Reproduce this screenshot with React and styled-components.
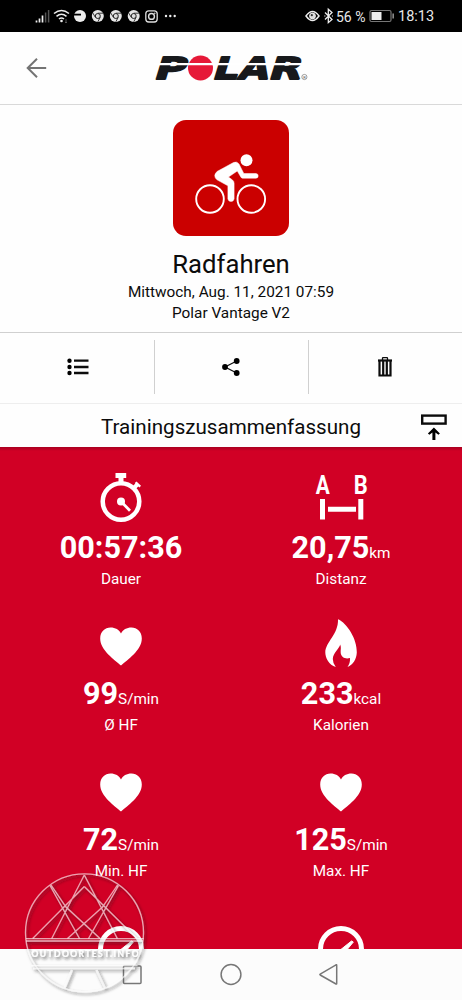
import React from "react";
import styled, { createGlobalStyle } from "styled-components";

const Global = createGlobalStyle`
  * { box-sizing: border-box; }
  body { margin: 0; background: #fff; font-family: Roboto, "Noto Sans", sans-serif; color: #0c0c0c; }
  svg { display: block; flex: none; overflow: visible; }
`;

const Screen = styled.div`
  width: 462px; height: 1000px; position: relative; overflow: hidden;
  display: flex; flex-direction: column; background: #fefefe;
`;
const StatusBar = styled.header`
  height: 32px; flex: none; background: #000; color: #e8e8e8;
  display: flex; align-items: center; justify-content: space-between;
  padding: 0 28px 0 35px;
`;
const StatusSide = styled.div`display: flex; align-items: center; height: 32px;`;
const StatusText = styled.span`
  font-size: ${(p) => p.$size}px; line-height: 32px; white-space: nowrap; padding-top: 1px;
  width: ${(p) => p.$width}px; margin-left: ${(p) => p.$gap || 0}px;
`;
const AppBar = styled.div`
  height: 73px; flex: none; border-bottom: 1px solid #d9d9d9;
  display: grid; grid-template-columns: 154px 1fr; align-items: center;
`;
const BackButton = styled.button`
  border: 0; background: none; padding: 0 0 0 26px; text-align: left;
`;
const Hero = styled.section`
  height: 228px; flex: none; padding-top: 15px; border-bottom: 1px solid #d0d0d0;
  display: flex; flex-direction: column; align-items: center;
`;
const SportTile = styled.div`
  width: 116px; height: 116px; border-radius: 13px; background: #cb0000;
`;
const SportName = styled.h1`
  margin: 13px 0 0; font-size: 25.7px; line-height: 30px; font-weight: 400;
`;
const Detail = styled.p`
  margin: 0; font-size: 15.35px; line-height: 21px;
  padding-top: ${(p) => p.$top || 0}px;
`;
const Actions = styled.nav`
  height: 71px; flex: none; padding: 7px 0 9px; border-bottom: 1px solid #eee;
  display: grid; grid-template-columns: repeat(3, 1fr);
`;
const Action = styled.button`
  border: 0; border-left: ${(p) => (p.$first ? "0" : "1px solid #d0d0d0")};
  padding: 0 ${(p) => p.$right || 0}px 0 ${(p) => (p.$first ? 2 : 0)}px; background: none;
  display: flex; align-items: center; justify-content: center;
`;
const SummaryBar = styled.div`
  height: 43px; flex: none; display: grid; grid-template-columns: 57px 1fr 57px;
  align-items: center; justify-items: center;
`;
const SummaryTitle = styled.h2`
  margin: 0; grid-column: 2; font-weight: 400; font-size: 20.6px; line-height: 44px; padding-top: 1px;
`;
const Stats = styled.main`
  height: 502px; flex: none; overflow: hidden; color: #fff;
  background: linear-gradient(#a90020, #d10025 4px);
  display: grid; grid-template-columns: 220px 220px; grid-auto-rows: 146px;
  padding: 26px 11px 0;
`;
const Stat = styled.div`display: flex; flex-direction: column; align-items: center;`;
const Value = styled.div`
  margin-top: 9px; height: 36px; line-height: 36px; font-size: 30.6px; font-weight: 700; white-space: nowrap;
`;
const Unit = styled.span`font-size: 15.3px; font-weight: 400;`;
const Label = styled.div`font-size: 15.3px; line-height: 20px; margin-top: 3px;`;
const SystemNav = styled.footer`
  height: 51px; flex: none; background: #fcfcfc;
  display: flex; align-items: center; justify-content: center;
`;
const Watermark = styled.div`
  position: absolute; left: 20px; top: 869px; width: 130px; height: 130px; pointer-events: none;
`;

const Chrome = ({ x }) => (
  <g transform={`translate(${x} 16)`}>
    <circle r="6" fill="#e6e6e6" />
    <circle r="2.5" fill="#ddd" stroke="#222" strokeWidth="1" />
    <path d="M0-2.8H5.2M-2.4 1.4-5-3M2.4 1.4 0 5.8" stroke="#222" strokeWidth="0.9" />
  </g>
);

const StatusIcons = () => (
  <svg width="144" height="32" viewBox="35 0 144 32" fill="none">
    <path d="M36.5 22.5v-2M39.5 22.5v-4M42.5 22.5v-7" stroke="#eee" strokeWidth="1.7" />
    <path d="M45.6 22.5V12.5M48.6 22.5V10" stroke="#555" strokeWidth="1.5" />
    <path d="M54 13.5q7.5-6 15 0M56.5 16.3q5-4 10 0M59 19q2.5-2 5 0" stroke="#eee" strokeWidth="1.6" />
    <circle cx="61.5" cy="21" r="1.3" fill="#eee" />
    <path d="M66 19v4m-1-1 1 1 1-1" stroke="#666" strokeWidth=".8" />
    <circle cx="80" cy="16" r="6" fill="#eee" /><path d="M73 14.6h8" stroke="#000" strokeWidth="1.8" />
    <Chrome x={97.8} /><Chrome x={115.8} /><Chrome x={133.7} />
    <rect x="145.8" y="10.8" width="11.4" height="11.2" rx="3" stroke="#ddd" strokeWidth="1.3" />
    <circle cx="151.5" cy="16.4" r="2.9" stroke="#ddd" strokeWidth="1.4" /><circle cx="154.8" cy="13.2" r=".8" fill="#ddd" />
    <g fill="#eee"><circle cx="166" cy="16" r="1.2" /><circle cx="170.3" cy="16" r="1.2" /><circle cx="174.7" cy="16" r="1.2" /></g>
  </svg>
);
const EyeBluetooth = () => (
  <svg width="31" height="32" viewBox="305 0 31 32" fill="none" stroke="#eee">
    <path d="M306 16q6.5-9 13 0q-6.5 9-13 0Z" strokeWidth="1.5" />
    <circle cx="312.5" cy="16" r="2.9" fill="#ddd" strokeWidth="1" /><circle cx="311.8" cy="15.2" r="1.1" fill="#333" stroke="none" />
    <path d="m325 12.5 7 7-3.7 3.2V9.2l3.7 3.3-7 7M324.5 16h.8m6.6 0h.8" strokeWidth="1.3" />
  </svg>
);
const Battery = () => (
  <svg width="26" height="32" viewBox="0 0 26 32">
    <rect x="1" y="10.5" width="21" height="11" rx="1.5" fill="#000" stroke="#777" strokeWidth="1.2" />
    <path d="M2.5 12h10v8h-10z" fill="#eee" /><path d="M23.5 13.5h1.3v5h-1.3z" fill="#aaa" />
  </svg>
);
const BackIcon = () => (
  <svg width="22" height="22" viewBox="0 0 22 22" fill="none" stroke="#747474" strokeWidth="2">
    <path d="M20.2 11H2M11 1.7 1.7 11l9.300 9.300" />
  </svg>
);

const letters = [["P", 153, 31], ["L", 211.5, 25], ["A", 237, 30], ["R", 267.5, 32]];
const Logo = () => (
  <svg width="156" height="30" viewBox="154 53 156 30">
    <g fill="#17191c" stroke="#17191c" strokeWidth="1.8" strokeLinejoin="round" fontFamily="DejaVu Sans, sans-serif" fontWeight="700" fontSize="30.5">
      {letters.map(([t, x, w]) => (
        <text key={t} transform={`translate(${x} 79) skewX(-17)`} textLength={w} lengthAdjust="spacingAndGlyphs">{t}</text>
      ))}
    </g>
    <circle cx="200.5" cy="68" r="12.5" fill="#e61938" />
    <path d="M154 64.2H304" stroke="#fff" strokeWidth="2.2" />
    <circle cx="304.4" cy="77" r="2.6" fill="none" stroke="#777" strokeWidth=".7" />
    <text x="304.4" y="78.5" textAnchor="middle" fontFamily="Roboto, sans-serif" fontSize="4" fill="#555">R</text>
  </svg>
);

const Cyclist = () => (
  <svg width="116" height="116" viewBox="173 120 116 116" fill="none" stroke="#fff">
    <circle cx="210" cy="199" r="13.8" strokeWidth="1.9" /><circle cx="251.3" cy="199" r="13.8" strokeWidth="1.9" />
    <circle cx="246.5" cy="160.3" r="6" fill="#fff" stroke="none" />
    <path d="M217 171.5 233.5 162.5q3.2-1.5 5.500 1.500l4.800 9.500H256q2.200.2 2.200 2.400T256 178.200H242.500q-1 0-1.700-1.200L237.300 171 228.500 177l4 3q1.600 1.200 1.600 3.300V199q-.6 2.500-3.100 2.500T227.900 199V185.800L217 179.800q-4.500-3.800 0-8.300Z" fill="#fff" strokeWidth=".5" strokeLinejoin="round" />
  </svg>
);
const ListIcon = () => (
  <svg width="22" height="18" viewBox="0 0 22 18">
    <path d="M7 2.700h14.500M7 9h14.500M7 15h14.500" stroke="#0c0c0c" strokeWidth="2.300" />
    <circle cx="2.500" cy="2.700" r="2.200" /><circle cx="2.500" cy="9" r="2.200" /><circle cx="2.500" cy="15" r="2.200" />
  </svg>
);
const ShareIcon = () => (
  <svg width="18" height="18" viewBox="0 0 18 18">
    <path d="M14.700 3 3 9l11.700 6" fill="none" stroke="#0c0c0c" strokeWidth="1.200" />
    <circle cx="3" cy="9" r="2.900" /><circle cx="14.700" cy="3" r="2.900" /><circle cx="14.700" cy="15" r="2.900" />
  </svg>
);
const TrashIcon = () => (
  <svg width="14" height="20" viewBox="0 0 14 20" fill="none" stroke="#0c0c0c">
    <path d="M0 3.500h14" strokeWidth="2.200" /><path d="M4.500 3V1.200q0-.6.6-.6h3.800q.6 0 .6.600V3" strokeWidth="1.300" />
    <path d="M1.500 4v14.500h11V4M5.200 4v14M8.800 4v14" strokeWidth="2.200" />
  </svg>
);
const PinTopIcon = () => (
  <svg width="26" height="26" viewBox="0 0 26 26">
    <rect x="1.200" y="1.600" width="23.400" height="8" fill="none" stroke="#0c0c0c" strokeWidth="2.400" />
    <path d="M12.900 13.500 18.900 19.500l-1.500 1.300-3-2.200V26h-3v-7.400l-3 2.200L6.900 19.500Z" />
  </svg>
);

const StatIcon = ({ type }) => (
  <svg width="48" height="48" viewBox="0 0 48 48" fill="#fff">
    {type === "time" && (
      <>
        <circle cx="24" cy="28.500" r="18.300" fill="none" stroke="#fff" strokeWidth="4.500" />
        <path d="M18.500 0h10.700v5h-2.700v5h-5V5h-3zM39.500 8.500l4.500 4.300-1.500 1.700-1.200-1-4.100 4.100-3-2.900 4.100-4.100-.5-.5z" />
        <circle cx="24" cy="28.500" r="4" /><path d="m24 28.500 9 9.200" stroke="#fff" strokeWidth="2.800" />
      </>
    )}
    {type === "distance" && (
      <>
        <g fontFamily="Roboto, sans-serif" fontWeight="700" fontSize="25" textAnchor="middle">
          <text x="5.700" y="20.700" textLength="14" lengthAdjust="spacingAndGlyphs">A</text>
          <text x="43.700" y="20.700" textLength="14" lengthAdjust="spacingAndGlyphs">B</text>
        </g>
        <path d="M3 26h5v20.500H3zM41.300 26h5v20.500h-5zM11 33.700h28v5H11z" />
      </>
    )}
    {type === "heart" && (
      <path d="M24 46.500C18 41 3.200 31.500 3.200 19.500 3.200 12.500 8 8.500 13.500 8.500c4.800 0 8.800 2.300 10.500 6 1.700-3.700 5.700-6 10.500-6C40 8.500 44.800 12.500 44.800 19.500 44.800 31.500 30 41 24 46.500Z" />
    )}
    {type === "flame" && (
      <path d="M21 .2C30 4 40.200 20 39.800 33.500 39.500 40 36 46 30.500 48c1.800-2.500 2.700-5 2.500-9-4.500 1.500-8.700-.7-9.300-5-.3-3 .8-5.500-.5-8.500C22.500 29.500 16 34 15.800 40q0 4.500 3 8C12 46 8.300 39 8.300 33.500 8.300 23 21.500 15.500 21 .2Z" />
    )}
    {type === "pace" && (
      <>
        <circle cx="24" cy="38" r="20.500" fill="none" stroke="#fff" strokeWidth="5" />
        <path d="m22 40 12.500-10 1.800 1-9 11Z" stroke="#fff" />
      </>
    )}
  </svg>
);

const stats = [
  ["time", "00:57:36", "", "Dauer"],
  ["distance", "20,75", "km", "Distanz"],
  ["heart", "99", "S/min", "Ø HF"],
  ["flame", "233", "kcal", "Kalorien"],
  ["heart", "72", "S/min", "Min. HF"],
  ["heart", "125", "S/min", "Max. HF"],
  ["pace"],
  ["pace"],
];

const NavIcons = () => (
  <svg width="218" height="51" viewBox="122 949 218 51" fill="none" stroke="#777" strokeWidth="1.500">
    <rect x="123.500" y="966" width="17.500" height="17.500" rx="1" />
    <circle cx="231" cy="974.500" r="9.900" />
    <path d="M336.700 965.200v18.400q0 .7-.7.400l-15.800-9q-.7-.5 0-.9l15.800-9.300q.7-.3.700.4Z" />
  </svg>
);

const WatermarkArt = () => (
  <svg width="130" height="130" viewBox="20 869 130 130" fill="none">
    <defs>
      <filter id="relief" x="-10%" y="-10%" width="125%" height="125%">
        <feDropShadow dx="1.700" dy="2" stdDeviation="1.500" floodColor="#222" floodOpacity=".85" />
      </filter>
    </defs>
    <g filter="url(#relief)">
      <g stroke="#fff" strokeOpacity=".62" strokeWidth="1.300">
        <circle cx="84.500" cy="932.800" r="59" />
        <path d="M84.300 875 51.700 938.500M84.300 875l33 63.500M84.300 886.500 32.700 938.500M84.300 886.500l52.500 52M50 885.500l29.500 53M118.500 885.500l-30 53M51 885l15 22 34 31.500M117.500 885l-15 22-35 31.500" />
        <path d="M26 938.700h117.500M26 941h117M31.500 965.700h106M33 968.500h102" />
        <path d="m72 970-7.500 18M96.500 970l8.500 18" strokeWidth="2" />
      </g>
      <text x="31.500" y="956.500" textLength="107" fill="#fff" fillOpacity=".95" fontFamily="Lato, sans-serif" fontWeight="700" fontSize="8.500">OUTDOORTEST.INFO</text>
    </g>
  </svg>
);

export default function App() {
  return (
    <Screen>
      <Global />
      <StatusBar>
        <StatusSide><StatusIcons /></StatusSide>
        <StatusSide>
          <EyeBluetooth />
          <StatusText $size={14} $width={33}>56 %</StatusText>
          <Battery />
          <StatusText $size={14.5} $width={36} $gap={3}>18:13</StatusText>
        </StatusSide>
      </StatusBar>
      <AppBar>
        <BackButton aria-label="Zurück"><BackIcon /></BackButton>
        <Logo />
      </AppBar>
      <Hero>
        <SportTile><Cyclist /></SportTile>
        <SportName>Radfahren</SportName>
        <Detail $top={3}>Mittwoch, Aug. 11, 2021 07:59</Detail>
        <Detail>Polar Vantage V2</Detail>
      </Hero>
      <Actions>
        <Action $first aria-label="Liste"><ListIcon /></Action>
        <Action $right={2} aria-label="Teilen"><ShareIcon /></Action>
        <Action $right={2} aria-label="Löschen"><TrashIcon /></Action>
      </Actions>
      <SummaryBar>
        <SummaryTitle>Trainingszusammenfassung</SummaryTitle>
        <PinTopIcon />
      </SummaryBar>
      <Stats>
        {stats.map(([type, value, unit, label], i) => (
          <Stat key={i}>
            <StatIcon type={type} />
            {value && <Value>{value}{unit && <Unit>{unit}</Unit>}</Value>}
            {label && <Label>{label}</Label>}
          </Stat>
        ))}
      </Stats>
      <SystemNav><NavIcons /></SystemNav>
      <Watermark><WatermarkArt /></Watermark>
    </Screen>
  );
}
